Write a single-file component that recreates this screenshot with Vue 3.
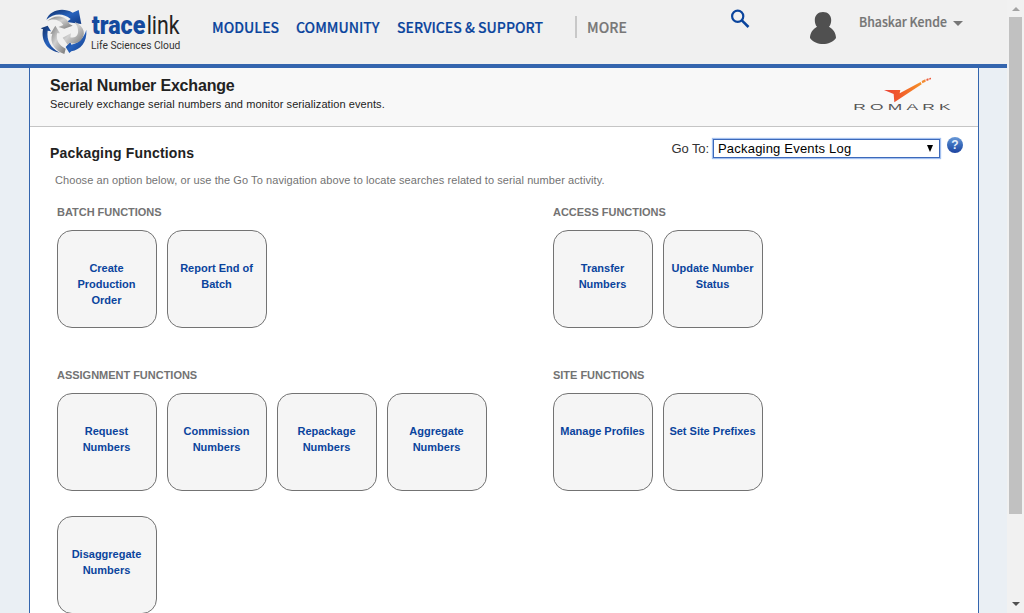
<script setup>
const rows = [
  [
    { title: 'BATCH FUNCTIONS', items: [['Create', 'Production', 'Order'], ['Report End of', 'Batch']] },
    { title: 'ACCESS FUNCTIONS', items: [['Transfer', 'Numbers'], ['Update Number', 'Status']] },
  ],
  [
    {
      title: 'ASSIGNMENT FUNCTIONS',
      items: [['Request', 'Numbers'], ['Commission', 'Numbers'], ['Repackage', 'Numbers'], ['Aggregate', 'Numbers'], ['Disaggregate', 'Numbers']],
    },
    { title: 'SITE FUNCTIONS', items: [['Manage Profiles'], ['Set Site Prefixes']] },
  ],
]
</script>

<template>
  <div class="window">
    <div class="page">
      <header class="top">
        <svg class="logo" width="160" height="64" viewBox="0 0 480 192">
          <defs>
            <linearGradient id="blue" x1="0" y1="0" x2="1" y2="1">
              <stop offset="0" stop-color="#102c62" />
              <stop offset=".5" stop-color="#2762bd" />
              <stop offset="1" stop-color="#123a83" />
            </linearGradient>
            <linearGradient id="silver" x1="0" y1="0" x2="1" y2="1">
              <stop offset="0" stop-color="#777" />
              <stop offset=".45" stop-color="#d0d0d0" />
              <stop offset="1" stop-color="#777" />
            </linearGradient>
          </defs>
          <g transform="translate(24 18)">
            <path fill="url(#blue)" d="M25 41C35 14 72 2 104 20L122 12L130 54L86 48L98 39C76 20 48 21 25 41Z" />
            <path fill="url(#silver)" d="M27 46C48 24 84 27 94 53L104 59L79 68L61 63L76 57C65 41 44 36 27 46Z" />
            <path fill="url(#blue)" d="M8 67L29 59L39 76L29 74C25 103 38 127 66 140C30 136 8 106 15 70Z" />
            <path fill="url(#silver)" d="M37 84L52 59L66 82L57 82C54 103 62 118 83 128L79 144C48 132 34 109 43 83Z" />
            <path fill="url(#blue)" d="M145 72C148 108 127 132 100 136L94 141L83 123L97 108L100 116C121 112 137 98 145 72Z" />
            <path fill="url(#silver)" d="M110 47C141 62 145 86 127 104C117 113 105 114 95 110L89 116L74 95L99 82L97 94C119 99 130 77 110 47Z" />
          </g>
          <text class="brand bold" x="185" y="103" textLength="161" lengthAdjust="spacingAndGlyphs">trace</text>
          <text class="brand" x="350" y="103" textLength="99" lengthAdjust="spacingAndGlyphs">link</text>
          <text class="tagline" x="183" y="147" textLength="268" lengthAdjust="spacingAndGlyphs">Life Sciences Cloud</text>
        </svg>
        <nav>
          <a class="n1"><span>MODULES</span></a>
          <a class="n2"><span>COMMUNITY</span></a>
          <a class="n3"><span>SERVICES &amp; SUPPORT</span></a>
          <a class="more"><span>MORE</span></a>
        </nav>
        <svg class="search" width="20" height="20" viewBox="0 0 20 20" fill="none" stroke="#0a449d" stroke-width="2.2">
          <circle cx="7.7" cy="7.3" r="5.6" />
          <path d="M11.8 11.4L18.5 18" stroke-width="2.6" />
        </svg>
        <svg class="avatar" width="28" height="34" viewBox="0 0 28 34" fill="#505050">
          <path d="M14 1C9 1 5.800 4.500 5.800 9C5.800 12 6.500 14 8 15.800C4 18 1 22 1 27C4 31 9 33 14 33S24 31 27 27C27 22 24 18 20 15.800C21.500 14 22.200 12 22.200 9C22.200 4.500 19 1 14 1Z" />
        </svg>
        <div class="user"><span>Bhaskar Kende</span></div>
        <i class="caret"></i>
      </header>

      <main>
        <section class="intro">
          <div>
            <h1>Serial Number Exchange</h1>
            <p>Securely exchange serial numbers and monitor serialization events.</p>
          </div>
          <svg class="romark" width="100" height="36" viewBox="0 0 300 108">
            <defs>
              <linearGradient id="flame">
                <stop offset="0" stop-color="#e94435" />
                <stop offset=".4" stop-color="#f1592b" />
                <stop offset="1" stop-color="#f59227" />
              </linearGradient>
            </defs>
            <path fill="url(#flame)" d="M96 39L145 39L143 49L206 15L209 22L127 76L125 51Z" />
            <path fill="#f28b32" d="M209 12L220 7L221 14L211 19Z" />
            <path fill="#ec5b3c" d="M223 6L229 4L230 10L224 12ZM232 3L237 2L237 7L232 8Z" />
            <text x="4" y="99" textLength="304" lengthAdjust="spacingAndGlyphs">ROMARK</text>
          </svg>
        </section>

        <section class="heading">
          <h2>Packaging Functions</h2>
          <div class="goto">
            <span class="goto-label">Go To:</span>
            <div class="select"><span>Packaging Events Log</span><i></i></div>
            <svg width="18" height="18" viewBox="0 0 18 18">
              <defs>
                <linearGradient id="help" x2="0" y2="1">
                  <stop offset="0" stop-color="#6a9ad8" />
                  <stop offset=".45" stop-color="#3c6fbd" />
                  <stop offset="1" stop-color="#1d43a0" />
                </linearGradient>
              </defs>
              <circle cx="9" cy="9" r="8" fill="url(#help)" />
              <text class="q" x="9" y="13" text-anchor="middle">?</text>
            </svg>
          </div>
        </section>
        <p class="hint">Choose an option below, or use the Go To navigation above to locate searches related to serial number activity.</p>

        <section v-for="(row, r) in rows" :key="r" class="row">
          <div v-for="g in row" :key="g.title" class="group">
            <h3>{{ g.title }}</h3>
            <div class="tiles">
              <a v-for="(t, i) in g.items" :key="i" class="tile">
                <span v-for="line in t" :key="line">{{ line }}</span>
              </a>
            </div>
          </div>
        </section>
      </main>
    </div>
    <aside class="scroll">
      <i class="up"></i>
      <div class="thumb"></div>
      <i class="down"></i>
    </aside>
  </div>
</template>

<style>
body { margin: 0; overflow: hidden; }
</style>

<style scoped>
* { box-sizing: border-box; }
h1, h2, h3, p { margin: 0; }
.window { display: flex; width: 1024px; height: 613px; overflow: hidden; background: #eaeff4; font-family: "Liberation Sans", Arial, sans-serif; }
.page { width: 1007px; height: 613px; }
.top { display: flex; align-items: flex-start; height: 68px; background: #f0f0f0; border-bottom: 4px solid #3465ae; padding-left: 30px; font-family: "Noto Sans CJK SC", "Noto Sans", sans-serif; }
.logo { flex: none; width: 160px; overflow: visible; }
.brand { font: 77px Roboto, sans-serif; fill: #222; }
.bold { font-weight: 900; fill: #144a9e; }
.tagline { font: 35px Roboto, sans-serif; fill: #333; }
nav { display: flex; width: 540px; padding: 15px 0 0 22px; }
nav a { flex: none; font-size: 15px; line-height: 24px; font-weight: 500; color: #0a449d; white-space: nowrap; }
nav a span, .user span { display: inline-block; transform: scaleX(.935); transform-origin: 0 50%; -webkit-text-stroke: .2px currentColor; }
.n1 { width: 84px; }
nav .n2 { width: 101px; line-height: 23px; }
.n3 { width: 178px; }
nav .more { height: 22px; margin-top: 1px; line-height: 21px; border-left: 2px solid #c8c8c8; padding-left: 10px; color: #777; }
.search { flex: none; margin: 9px 0 0; }
.avatar { flex: none; margin: 11px 0 0 59px; }
.user { width: 88px; margin: 12px 0 0 22px; font-size: 13px; line-height: 20px; font-weight: 500; color: #757575; white-space: nowrap; }
.user span { transform: scaleX(.945); }
.caret { margin: 21px 0 0 6px; border: 5px solid transparent; border-top-color: #777; border-bottom: 0; }
main { width: 950px; height: 545px; margin-left: 29px; background: #fff; border: solid #3465ae; border-width: 0 1px; overflow: hidden; }
.intro { display: flex; justify-content: space-between; height: 59px; padding: 8px 26px 0 20px; background: #f8f8f8; border-bottom: 1px solid #c5c5c5; }
h1 { font-size: 16px; line-height: 20px; color: #222; letter-spacing: -.18px; }
.intro p { font-size: 11px; line-height: 16px; color: #222; letter-spacing: .08px; }
.romark { margin-top: 1px; overflow: visible; }
.romark text { font: 29px "Liberation Sans", sans-serif; fill: #555; letter-spacing: 7px; }
.heading { display: flex; justify-content: space-between; height: 41px; padding: 9px 14px 0 20px; }
h2 { margin-top: 8px; font-size: 14px; line-height: 18px; color: #222; letter-spacing: .18px; }
.goto { display: flex; align-items: flex-start; }
.goto-label { margin: 4px 4px 0 0; font-size: 13px; line-height: 17px; color: #333; letter-spacing: -.1px; }
.select { display: flex; align-items: center; justify-content: space-between; width: 227px; height: 19px; margin: 3px 6px 0 0; padding: 0 6px 0 4px; border: 1px solid #3d69ba; box-shadow: 0 0 1px 1px #a3c0f0; font-size: 13px; line-height: 15px; color: #000; letter-spacing: .2px; }
.select span { margin-top: -1px; }
.select i { margin-top: -1px; border: 3.5px solid transparent; border-top: 7px solid #000; border-bottom: 0; }
.q { font: bold 12px "Liberation Sans", sans-serif; fill: #e6effb; }
.hint { height: 37px; padding: 4px 0 0 25px; font-size: 11px; line-height: 16px; color: #737373; letter-spacing: .08px; }
.row { display: flex; height: 163px; padding-left: 27px; }
.group { flex: none; width: 496px; }
h3 { margin-bottom: 11px; font-size: 11px; line-height: 14px; color: #737373; letter-spacing: -.02px; }
.tiles { display: flex; flex-wrap: wrap; width: 450px; gap: 25px 10px; }
.tile { display: flex; flex-direction: column; width: 100px; height: 98px; padding: 29px 1px 0 0; border: 1px solid #737373; border-radius: 15px; background: #f5f5f5; color: #0a449d; font-size: 11px; font-weight: bold; line-height: 16px; text-align: center; white-space: nowrap; }
.scroll { display: flex; flex-direction: column; align-items: center; width: 17px; height: 613px; background: #f1f1f1; padding-top: 7px; }
.up { border: 4px solid transparent; border-top: 0; border-bottom-color: #a3a3a3; }
.thumb { width: 13px; height: 497px; margin-top: 6px; background: #c1c1c1; }
.down { margin-top: 88px; border: 4px solid transparent; border-bottom: 0; border-top-color: #505050; }
</style>
